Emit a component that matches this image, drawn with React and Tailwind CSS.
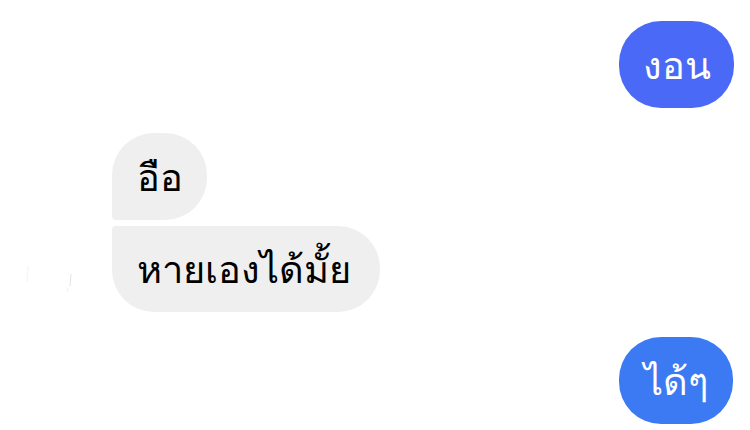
export default function App() {
  return (
    <div className="w-[750px] h-[430px] bg-white overflow-hidden flex flex-col font-mono">
      <div className="flex justify-end pr-[16px] pt-[21px]">
        <div className="h-[87px] w-[115px] pt-[8px] rounded-[42px] bg-[#4a69f6] text-white text-[38px] flex items-center justify-center leading-none">
          งอน
        </div>
      </div>
      <div className="flex items-end mt-[25px]">
        <div className="w-[112px] h-[86px] flex items-center justify-center">
          <svg width="70" height="50" viewBox="0 0 70 50" className="opacity-40">
            <path d="M6 38 L7 22" stroke="#e6e6e6" strokeWidth="1" />
            <path d="M50 30 L49 42" stroke="#bbb" strokeWidth="1" />
            <path d="M47 44 L46 48" stroke="#ddd" strokeWidth="1" />
          </svg>
        </div>
        <div className="flex flex-col gap-[6px] items-start">
          <div className="h-[87px] w-[95px] pt-[8px] rounded-[42px] rounded-bl-[4px] bg-[#efefef] text-black text-[38px] flex items-center pl-[25px] leading-none">
            อือ
          </div>
          <div className="h-[86px] w-[268px] pt-[8px] rounded-[42px] rounded-tl-[4px] bg-[#efefef] text-black text-[38px] flex items-center pl-[25px] leading-none">
            หายเองได้มั้ย
          </div>
        </div>
      </div>
      <div className="flex justify-end pr-[17px] mt-[25px]">
        <div className="h-[87px] w-[114px] pt-[8px] rounded-[42px] bg-[#3c7af3] text-white text-[38px] flex items-center justify-center leading-none">
          ได้ๆ
        </div>
      </div>
    </div>
  );
}
